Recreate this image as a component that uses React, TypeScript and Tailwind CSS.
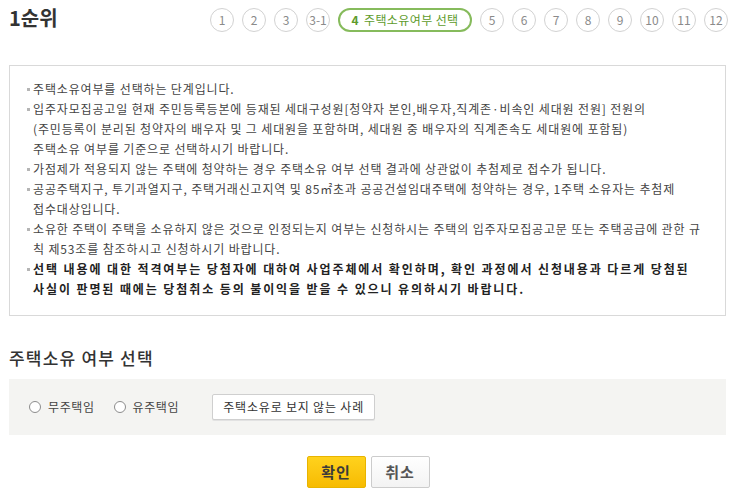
import React from "react";

const font = { fontFamily: '"Noto Sans CJK KR", "Noto Sans", sans-serif' };

function Step({ label }: { label: string }) {
  return (
    <div className="flex h-[24px] w-[24px] items-center justify-center rounded-full border border-[#d2d2d2] bg-white text-[12px] leading-none text-[#8a8a8a]">
      {label}
    </div>
  );
}

function Bullet({ lines, bold }: { lines: string[]; bold?: boolean }) {
  return (
    <div className="relative pl-[15px]">
      <span className="absolute left-[9px] top-[9px] h-[3px] w-[3px] bg-[#b5b5b5]" />
      {lines.map((l, i) => (
        <div
          key={i}
          className={`h-[20px] whitespace-nowrap leading-[20px] ${bold ? "font-bold text-[#222] tracking-[1.9px]" : "text-[#444] tracking-[0.85px]"}`}
        >
          {l}
        </div>
      ))}
    </div>
  );
}

export default function App() {
  const left = ["1", "2", "3", "3-1"];
  const right = ["5", "6", "7", "8", "9", "10", "11", "12"];
  return (
    <div className="h-[504px] w-[735px] bg-white" style={font}>
      <div className="flex items-center justify-between pl-[9px] pr-[7px] pt-[8px]">
        <div className="-mt-[5px] text-[20px] font-bold leading-[24px] text-[#333]">1순위</div>
        <div className="flex items-center gap-[8px]">
          {left.map((s) => (
            <Step key={s} label={s} />
          ))}
          <div className="flex h-[24px] w-[134px] items-center justify-center rounded-full border-2 border-[#86bb5c] bg-white text-[12px] leading-none tracking-[0.4px] text-[#5e9b2c]">
            <span className="mr-[5px] font-bold">4</span>주택소유여부 선택
          </div>
          {right.map((s) => (
            <Step key={s} label={s} />
          ))}
        </div>
      </div>

      <div className="mx-[9px] mt-[33px] h-[251px] border border-[#d9d9d9] pt-[13px] pl-[8px] text-[12px]">
        <Bullet lines={["주택소유여부를 선택하는 단계입니다."]} />
        <Bullet
          lines={[
            "입주자모집공고일 현재 주민등록등본에 등재된 세대구성원[청약자 본인,배우자,직계존·비속인 세대원 전원] 전원의",
            "(주민등록이 분리된 청약자의 배우자 및 그 세대원을 포함하며, 세대원 중 배우자의 직계존속도 세대원에 포함됨)",
            "주택소유 여부를 기준으로 선택하시기 바랍니다.",
          ]}
        />
        <Bullet lines={["가점제가 적용되지 않는 주택에 청약하는 경우 주택소유 여부 선택 결과에 상관없이 추첨제로 접수가 됩니다."]} />
        <Bullet
          lines={[
            "공공주택지구, 투기과열지구, 주택거래신고지역 및 85㎡초과 공공건설임대주택에 청약하는 경우, 1주택 소유자는 추첨제",
            "접수대상입니다.",
          ]}
        />
        <Bullet
          lines={[
            "소유한 주택이 주택을 소유하지 않은 것으로 인정되는지 여부는 신청하시는 주택의 입주자모집공고문 또는 주택공급에 관한 규",
            "칙 제53조를 참조하시고 신청하시기 바랍니다.",
          ]}
        />
        <Bullet
          bold
          lines={[
            "선택 내용에 대한 적격여부는 당첨자에 대하여 사업주체에서 확인하며, 확인 과정에서 신청내용과 다르게 당첨된",
            "사실이 판명된 때에는 당첨취소 등의 불이익을 받을 수 있으니 유의하시기 바랍니다.",
          ]}
        />
      </div>

      <div className="ml-[9px] mt-[31px] text-[17px] font-medium leading-[22px] tracking-[1.2px] text-[#333]">주택소유 여부 선택</div>

      <div className="mx-[9px] mt-[10px] flex h-[56px] items-center bg-[#f4f4f2] pl-[20px] text-[12px] tracking-[0.6px] text-[#444]">
        <label className="flex items-center gap-[7px]">
          <span className="h-[12px] w-[12px] rounded-full border border-[#8c8c8c] bg-white" />
          무주택임
        </label>
        <label className="ml-[19px] flex items-center gap-[7px]">
          <span className="h-[12px] w-[12px] rounded-full border border-[#8c8c8c] bg-white" />
          유주택임
        </label>
        <button className="ml-[33px] h-[26px] w-[163px] rounded-[2px] border border-[#cfcfcf] bg-white text-[12px] tracking-[0.8px] text-[#333] shadow-[0_1px_0_#e2e2e2]">
          주택소유로 보지 않는 사례
        </button>
      </div>

      <div className="mt-[21px] flex justify-center gap-[5px] pl-[1px]">
        <button className="h-[32px] w-[59px] rounded-[2px] border border-[#e8b400] bg-gradient-to-b from-[#ffd21c] to-[#f7bb00] text-[15px] font-bold tracking-[1px] text-[#3a3a3a]">
          확인
        </button>
        <button className="h-[32px] w-[59px] rounded-[2px] border border-[#cccccc] bg-gradient-to-b from-white to-[#f3f3f3] text-[15px] font-bold tracking-[1px] text-[#555]">
          취소
        </button>
      </div>
    </div>
  );
}
